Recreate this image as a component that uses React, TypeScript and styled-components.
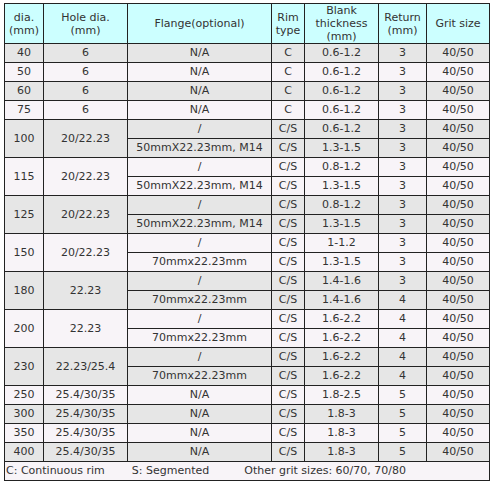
import React from 'react';
import styled, { createGlobalStyle } from 'styled-components';

const GlobalStyle = createGlobalStyle`
    html, body {
        margin: 0;
        padding: 0;
        background: #ffffff;
    }
`;

const Page = styled.div`
    padding: 3px 4px;
    font-family: "DejaVu Sans", Verdana, sans-serif;
    font-size: 11px;
    color: #333;
`;

const SpecTable = styled.table`
    border-collapse: collapse;
    border: 1px solid #222;
    table-layout: fixed;
    width: 486px;
`;

const HeadCell = styled.th<{ $w: number }>`
    width: ${p => p.$w}px;
    height: 38px;
    padding: 0;
    border: 1px solid #222;
    background: #ccffff;
    font-weight: normal;
    line-height: 13px;
    text-align: center;
    vertical-align: middle;
`;

const Cell = styled.td<{ $shade: boolean }>`
    height: 18px;
    padding: 0;
    border: 1px solid #222;
    background: ${p => (p.$shade ? '#e6e6e6' : '#f8f4f8')};
    line-height: 18px;
    text-align: center;
    white-space: nowrap;
`;

const FooterCell = styled.td`
    height: 18px;
    padding: 0 0 0 1px;
    border: 1px solid #222;
    background: #f8f4f8;
    line-height: 18px;
    text-align: left;
    white-space: nowrap;
`;

const Note = styled.span<{ $gap: number }>`
    margin-left: ${p => p.$gap}px;
`;

type Sub = { flange: string; rim: string; blank: string; ret: string };
type Group = { dia: string; hole: string; rows: Sub[] };

const headers: [string[], number][] = [
    [['dia.', '(mm)'], 38],
    [['Hole dia.', '(mm)'], 83],
    [['Flange(optional)'], 143],
    [['Rim', 'type'], 32],
    [['Blank', 'thickness', '(mm)'], 73],
    [['Return', '(mm)'], 47],
    [['Grit size'], 62],
];

const single = (dia: string, hole: string, flange: string, rim: string, blank: string, ret: string): Group => ({
    dia, hole, rows: [{ flange, rim, blank, ret }],
});

const pair = (dia: string, hole: string, flange: string, a: [string, string], b: [string, string]): Group => ({
    dia, hole,
    rows: [
        { flange: '/', rim: 'C/S', blank: a[0], ret: a[1] },
        { flange, rim: 'C/S', blank: b[0], ret: b[1] },
    ],
});

const groups: Group[] = [
    single('40', '6', 'N/A', 'C', '0.6-1.2', '3'),
    single('50', '6', 'N/A', 'C', '0.6-1.2', '3'),
    single('60', '6', 'N/A', 'C', '0.6-1.2', '3'),
    single('75', '6', 'N/A', 'C', '0.6-1.2', '3'),
    pair('100', '20/22.23', '50mmX22.23mm, M14', ['0.6-1.2', '3'], ['1.3-1.5', '3']),
    pair('115', '20/22.23', '50mmX22.23mm, M14', ['0.8-1.2', '3'], ['1.3-1.5', '3']),
    pair('125', '20/22.23', '50mmX22.23mm, M14', ['0.8-1.2', '3'], ['1.3-1.5', '3']),
    pair('150', '20/22.23', '70mmx22.23mm', ['1-1.2', '3'], ['1.3-1.5', '3']),
    pair('180', '22.23', '70mmx22.23mm', ['1.4-1.6', '3'], ['1.4-1.6', '4']),
    pair('200', '22.23', '70mmx22.23mm', ['1.6-2.2', '4'], ['1.6-2.2', '4']),
    pair('230', '22.23/25.4', '70mmx22.23mm', ['1.6-2.2', '4'], ['1.6-2.2', '4']),
    single('250', '25.4/30/35', 'N/A', 'C/S', '1.8-2.5', '5'),
    single('300', '25.4/30/35', 'N/A', 'C/S', '1.8-3', '5'),
    single('350', '25.4/30/35', 'N/A', 'C/S', '1.8-3', '5'),
    single('400', '25.4/30/35', 'N/A', 'C/S', '1.8-3', '5'),
];

const App: React.FC = () => {
    return (
        <Page>
            <GlobalStyle />
            <SpecTable>
                <thead>
                    <tr>
                        {headers.map(([lines, w]) => (
                            <HeadCell key={lines.join(' ')} $w={w}>
                                {lines.map((l, i) => (
                                    <React.Fragment key={l}>
                                        {i > 0 && <br />}
                                        {l}
                                    </React.Fragment>
                                ))}
                            </HeadCell>
                        ))}
                    </tr>
                </thead>
                <tbody>
                    {groups.map((g, gi) => {
                        const shade = gi % 2 === 0;
                        return g.rows.map((r, ri) => (
                            <tr key={`${g.dia}-${ri}`}>
                                {ri === 0 && (
                                    <>
                                        <Cell $shade={shade} rowSpan={g.rows.length}>{g.dia}</Cell>
                                        <Cell $shade={shade} rowSpan={g.rows.length}>{g.hole}</Cell>
                                    </>
                                )}
                                <Cell $shade={shade}>{r.flange}</Cell>
                                <Cell $shade={shade}>{r.rim}</Cell>
                                <Cell $shade={shade}>{r.blank}</Cell>
                                <Cell $shade={shade}>{r.ret}</Cell>
                                <Cell $shade={shade}>40/50</Cell>
                            </tr>
                        ));
                    })}
                    <tr>
                        <FooterCell colSpan={7}>
                            C: Continuous rim
                            <Note $gap={27}>S: Segmented</Note>
                            <Note $gap={35}>Other grit sizes: 60/70, 70/80</Note>
                        </FooterCell>
                    </tr>
                </tbody>
            </SpecTable>
        </Page>
    );
};

export default App;
